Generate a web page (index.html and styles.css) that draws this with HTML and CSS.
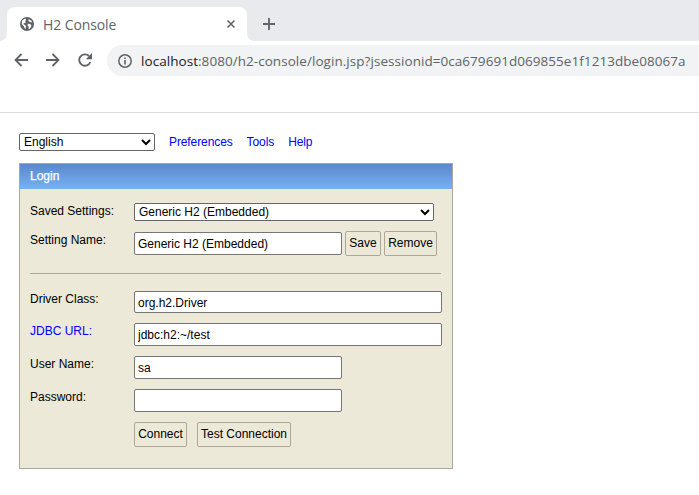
FILE: index.html
```html
<!DOCTYPE html>
<html lang="en">
<head>
<meta charset="utf-8">
<title>H2 Console</title>
<link rel="stylesheet" href="styles.css">
</head>
<body>
<header class="chrome">
  <div class="tabstrip">
    <div class="tab">
      <svg class="globe" width="14" height="14" viewBox="0 0 16 16"><circle cx="8" cy="8" r="8" fill="#5f6368"/><path d="M2.500 4 L6 1.800 L7 3.400 L5.800 4.800 L6.800 6 L5.600 7.200 L4.200 6.400 L4.200 8.200 L6.400 9.800 L6.800 10.400 L6.400 13.800 L5.200 12.600 L4.200 10.400 L2 8 Z M9.800 2.200 L13 4.200 L13.800 6 L12 6 L11 5 L9.800 5 Z M9 7.600 L11.600 8 L12.800 9.200 L12.800 11.400 L10.600 13.600 L9.800 13.600 L10 11 L8.600 9.600 Z" fill="#fff"/></svg>
      <span class="tab-title">H2 Console</span>
      <svg class="tab-close" width="8" height="8" viewBox="0 0 8 8"><path d="M0.500 0.500 L7.500 7.500 M7.500 0.500 L0.500 7.500" stroke="#5f6368" stroke-width="1.500" fill="none"/></svg>
    </div>
    <svg class="new-tab" width="12" height="12" viewBox="0 0 12 12"><path d="M6 0 V12 M0 6 H12" stroke="#5f6368" stroke-width="1.800" fill="none"/></svg>
  </div>
  <div class="toolbar">
    <svg class="nav-icon" width="14" height="14" viewBox="0 0 14 14"><path d="M14 7 H2 M7.500 1 L1.500 7 L7.500 13" stroke="#5f6368" stroke-width="1.800" fill="none"/></svg>
    <svg class="nav-icon" width="14" height="14" viewBox="0 0 14 14"><path d="M0 7 H12 M6.500 1 L12.500 7 L6.500 13" stroke="#5f6368" stroke-width="1.800" fill="none"/></svg>
    <svg class="nav-icon" width="14" height="14" viewBox="0 0 14 14"><path d="M12.300 9 A5.700 5.700 0 1 1 11 3" stroke="#5f6368" stroke-width="1.800" fill="none"/><path d="M14 0 V6.200 H7.800 Z" fill="#5f6368"/></svg>
    <div class="omnibox">
      <svg class="info" width="14" height="14" viewBox="0 0 14 14"><circle cx="7" cy="7" r="6.200" stroke="#5f6368" stroke-width="1.500" fill="none"/><path d="M7 6 V10.500 M7 3.500 V5" stroke="#5f6368" stroke-width="1.600" fill="none"/></svg>
      <span class="url"><span class="host">localhost</span>:8080/h2-console/login.jsp?jsessionid=0ca679691d069855e1f1213dbe08067a</span>
    </div>
  </div>
</header>
<main class="page">
  <nav class="topbar">
    <select class="lang"><option>English</option></select>
    <a href="#">Preferences</a>
    <a href="#">Tools</a>
    <a href="#">Help</a>
  </nav>
  <section class="login">
    <h1 class="login-head">Login</h1>
    <form class="login-body">
      <div class="row row-saved">
        <label class="lbl">Saved Settings:</label>
        <select class="sel-saved"><option>Generic H2 (Embedded)</option></select>
      </div>
      <div class="row row-name">
        <label class="lbl">Setting Name:</label>
        <input class="inp inp-short" value="Generic H2 (Embedded)">
        <button type="button" class="btn btn-save">Save</button>
        <button type="button" class="btn btn-remove">Remove</button>
      </div>
      <hr class="rule">
      <div class="row row-driver">
        <label class="lbl">Driver Class:</label>
        <input class="inp inp-long" value="org.h2.Driver">
      </div>
      <div class="row row-url">
        <a class="lbl lbl-link" href="#">JDBC URL:</a>
        <input class="inp inp-long" value="jdbc:h2:~/test">
      </div>
      <div class="row row-user">
        <label class="lbl">User Name:</label>
        <input class="inp inp-short" value="sa">
      </div>
      <div class="row row-pass">
        <label class="lbl">Password:</label>
        <input class="inp inp-short" type="password">
      </div>
      <div class="row row-actions">
        <span class="lbl"></span>
        <button type="button" class="btn btn-connect">Connect</button>
        <button type="button" class="btn btn-test">Test Connection</button>
      </div>
    </form>
  </section>
</main>
</body>
</html>
```
FILE: styles.css
```css
* { box-sizing: border-box; }
html, body { margin: 0; padding: 0; background: #fff; }
body { width: 699px; height: 495px; overflow: hidden; font-family: "Liberation Sans", Arial, sans-serif; font-size: 12px; color: #000; }

.chrome { height: 113px; border-bottom: 1px solid #dcdcdc; font-family: "Open Sans", "Noto Sans", sans-serif; }
.tabstrip { height: 41px; background: #e8eaed; padding: 7px 0 0 7px; display: flex; align-items: center; }
.tab { position: relative; width: 240px; height: 34px; background: #fff; border-radius: 8px 8px 0 0; display: flex; align-items: center; padding: 0 12px 0 13px; }
.tab::before, .tab::after { content: ""; position: absolute; bottom: 0; width: 7px; height: 7px; }
.tab::before { left: -7px; background: radial-gradient(circle at 0 0, #e8eaed 6.5px, #fff 7px); }
.tab::after { right: -7px; background: radial-gradient(circle at 100% 0, #e8eaed 6.5px, #fff 7px); }
.globe { flex: none; }
.tab-title { margin-left: 9px; font-size: 14px; color: #5f6368; flex: 1; letter-spacing: -0.1px; }
.tab-close { flex: none; }
.new-tab { margin-left: 16px; }
.toolbar { height: 38px; display: flex; align-items: flex-start; padding: 4px 0 0 14px; }
.nav-icon { margin: 8px 18px 0 0; flex: none; }
.nav-icon:nth-child(2) { margin-right: 18px; }
.omnibox { flex: 1; height: 31px; background: #f1f3f4; border-radius: 15.5px 0 0 15.5px; margin-left: -3px; display: flex; align-items: center; padding-left: 11px; white-space: nowrap; }
.info { flex: none; }
.url { margin-left: 9px; font-size: 13.5px; letter-spacing: 0.05px; color: #5f6368; }
.host { color: #202124; }

.page { padding: 20px 0 0 19px; }
.topbar { display: flex; align-items: center; height: 18px; }
.topbar a { color: #00f; text-decoration: none; font-size: 12px; margin-right: 14px; letter-spacing: -0.1px; }
.lang { width: 136px; height: 18px; margin: 0 14px 0 0; font: 12px "Liberation Sans", Arial, sans-serif; background-color: #fff; padding: 0; border: 1px solid #666; border-radius: 2px; }

.login { width: 434px; margin-top: 12px; border: 1px solid #aca899; background: #ece9d8; height: 306px; }
.login-head { margin: 0; height: 25px; padding: 6px 0 0 10px; font-size: 12px; font-weight: normal; -webkit-text-stroke: 0.25px #fff; color: #fff; line-height: 13px; background: linear-gradient(to bottom, #5a88cb, #77b1f5); }
.login-body { padding: 14px 0 0 10px; }
.row { display: flex; align-items: flex-start; }
.lbl { width: 104px; flex: none; line-height: 14px; color: #000; text-decoration: none; }
.lbl-link { color: #00f; }
.row-saved { height: 29px; }
.row-saved .lbl { margin-top: 1px; }
.row-name { height: 41px; }
.row-name .lbl { margin-top: 1px; }
.row-driver { height: 32px; }
.row-driver .inp { height: 22px; padding-bottom: 0; }
.row-url { height: 33px; }
.row-user { height: 33px; }
.row-pass { height: 33px; }
.row-driver .lbl, .row-url .lbl, .row-user .lbl, .row-pass .lbl { margin-top: 1px; }
.sel-saved { width: 300px; height: 18px; margin: 0; font: 12px "Liberation Sans", Arial, sans-serif; background-color: #fff; padding: 0; border: 1px solid #666; border-radius: 2px; }
.inp { height: 23px; padding: 1px 3px; margin: 0; font: 12px "Liberation Sans", Arial, sans-serif; background: #fff; border: 1px solid #767676; border-radius: 2px; }
.inp-short { width: 208px; }
.inp-long { width: 308px; }
.btn { height: 25px; padding: 0 0 2px; font: 12px "Liberation Sans", Arial, sans-serif; color: #000; background: #ece9d8; border: 1px solid #aca899; border-radius: 2px; }
.btn-save { width: 36px; margin: -1px 0 0 3px; }
.btn-remove { width: 53px; margin: -1px 0 0 3px; }
.btn-connect { width: 53px; }
.btn-test { width: 94px; margin-left: 10px; }
.rule { width: 411px; height: 1px; margin: 0 0 17px 0; border: 0; background: #aca899; }
```
